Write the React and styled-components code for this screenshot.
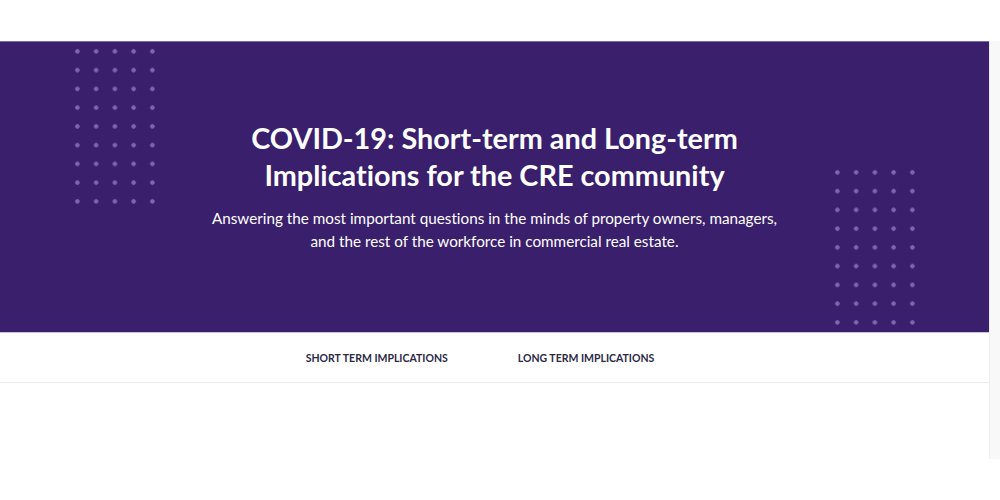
import React from "react";
import styled, { createGlobalStyle } from "styled-components";

const Global = createGlobalStyle`
  html, body { margin: 0; padding: 0; background: #fff; }
  body { font-family: "Lato", "Open Sans", sans-serif; font-variant-ligatures: none; }
`;

const Page = styled.div`
  padding-top: 41px;
  display: flex;
  align-items: flex-start;
  width: 1000px;
`;

const Main = styled.div`
  flex: 1;
  min-width: 0;
`;

const ScrollStrip = styled.div`
  width: 10px;
  height: 418px;
  background: #f8f8f8;
  border-left: 1px solid #ececec;
`;

const Banner = styled.section`
  position: relative;
  height: 291px;
  background: #3a1f6d;
  border-top: 1px solid #7d6aa3;
  box-sizing: border-box;
  display: flex;
  flex-direction: column;
  align-items: center;
  padding-top: 78px;
  overflow: hidden;
`;

const DotGrid = styled.div`
  position: absolute;
  left: ${(p) => p.$left}px;
  top: ${(p) => p.$top}px;
  width: ${5 * 18.75}px;
  height: ${9 * 18.75}px;
  background-image: radial-gradient(circle, #8066ae 1.9px, transparent 2.5px);
  background-size: 18.75px 18.75px;
`;

const Title = styled.h1`
  margin: 0;
  color: #fff;
  font-family: "Lato", sans-serif;
  font-weight: 700;
  font-size: 28.8px;
  line-height: 37px;
  text-align: center;
  font-variant-ligatures: none;
`;

const Subtitle = styled.p`
  margin: 13px 0 0;
  color: #fff;
  font-family: "Lato", sans-serif;
  font-weight: 400;
  font-size: 15.25px;
  line-height: 23px;
  text-align: center;
  font-variant-ligatures: none;
`;

const TabBar = styled.nav`
  height: 51px;
  border-top: 1px solid #c9c0dc;
  border-bottom: 1px solid #ececec;
  box-sizing: border-box;
  display: flex;
  justify-content: center;
  align-items: center;
  gap: 70px;
  padding-right: 29px;
`;

const Tab = styled.a`
  font-family: "Lato", sans-serif;
  font-weight: 700;
  font-size: 10.5px;
  color: #2b2846;
  text-transform: uppercase;
  cursor: pointer;
`;

export default function App() {
  return (
    <>
      <Global />
      <Page>
        <Main>
          <Banner>
            <DotGrid $left={68} $top={0} />
            <DotGrid $left={828} $top={121} />
            <Title>
              COVID-19: Short-term and Long-term
              <br />
              Implications for the CRE community
            </Title>
            <Subtitle>
              Answering the most important questions in the minds of property owners, managers,
              <br />
              and the rest of the workforce in commercial real estate.
            </Subtitle>
          </Banner>
          <TabBar>
            <Tab>Short term implications</Tab>
            <Tab>Long term implications</Tab>
          </TabBar>
        </Main>
        <ScrollStrip />
      </Page>
    </>
  );
}
